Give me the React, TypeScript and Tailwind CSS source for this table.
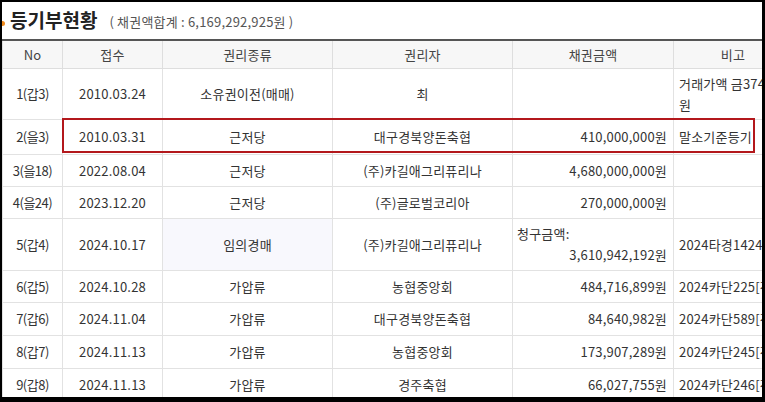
const rows = [
  { no: '1(갑3)', date: '2010.03.24', kind: '소유권이전(매매)', holder: '최', amount: '', note: ['거래가액 금374,000,000', '원'], h: 'h-[51px]' },
  { no: '2(을3)', date: '2010.03.31', kind: '근저당', holder: '대구경북양돈축협', amount: '410,000,000원', note: ['말소기준등기'], h: 'h-[35px]' },
  { no: '3(을18)', date: '2022.08.04', kind: '근저당', holder: '(주)카길애그리퓨리나', amount: '4,680,000,000원', note: [], h: 'h-[32px]' },
  { no: '4(을24)', date: '2023.12.20', kind: '근저당', holder: '(주)글로벌코리아', amount: '270,000,000원', note: [], h: 'h-[32px]' },
  { no: '5(갑4)', date: '2024.10.17', kind: '임의경매', holder: '(주)카길애그리퓨리나', amount: '3,610,942,192원', claim: true, note: ['2024타경14245'], h: 'h-[52px]' },
  { no: '6(갑5)', date: '2024.10.28', kind: '가압류', holder: '농협중앙회', amount: '484,716,899원', note: ['2024카단225[전자]'], h: 'h-[32px]' },
  { no: '7(갑6)', date: '2024.11.04', kind: '가압류', holder: '대구경북양돈축협', amount: '84,640,982원', note: ['2024카단589[전자]'], h: 'h-[33px]' },
  { no: '8(갑7)', date: '2024.11.13', kind: '가압류', holder: '농협중앙회', amount: '173,907,289원', note: ['2024카단245[전자]'], h: 'h-[33px]' },
  { no: '9(갑8)', date: '2024.11.13', kind: '가압류', holder: '경주축협', amount: '66,027,755원', note: ['2024카단246[전자]'], h: 'h-[33px]' },
];

export default function App() {
  return (
    <div className="w-[765px] h-[402px] bg-black pl-[2px] pt-[2px] pr-[3px] pb-[5px] font-['Noto_Sans_CJK_KR',sans-serif] text-[#333]">
      <div className="relative h-full bg-white overflow-hidden">
        <div className="h-[37px] flex items-center gap-[12px] pl-[8px]">
          <span className="absolute left-[-2px] top-[19px] w-[5px] h-[5px] rounded-full bg-[#f08a1c]" />
          <h2 className="text-[19px] font-bold text-[#222]">등기부현황</h2>
          <span className="text-[13px] text-[#555] pt-[3px] tracking-[0.2px]">( 채권액합계 : 6,169,292,925원 )</span>
        </div>

        <table className="table-fixed border-collapse w-[790px] text-[13px] leading-[21px] tracking-[0.2px]">
          <colgroup>
            <col className="w-[60px]" />
            <col className="w-[100px]" />
            <col className="w-[170px]" />
            <col className="w-[180px]" />
            <col className="w-[161px]" />
            <col className="w-[119px]" />
          </colgroup>
          <thead>
            <tr className="h-[28px] bg-[#f7f7f7] border-t-2 border-[#555] text-[#444]">
              {['No', '접수', '권리종류', '권리자', '채권금액', '비고'].map((t) => (
                <th key={t} className="font-normal border-x border-b border-[#dedede] text-center">{t}</th>
              ))}
            </tr>
          </thead>
          <tbody>
            {rows.map((r) => (
              <tr key={r.no} className={r.h}>
                <td className="border-x border-b border-[#e2e2e2] text-center whitespace-nowrap tracking-[-0.5px]">{r.no}</td>
                <td className="border-x border-b border-[#e2e2e2] text-center">{r.date}</td>
                <td className={`border-x border-b border-[#e2e2e2] text-center ${r.claim ? 'bg-[#f8f8fd]' : ''}`}>{r.kind}</td>
                <td className="border-x border-b border-[#e2e2e2] text-center whitespace-nowrap">{r.holder}</td>
                <td className="border-x border-b border-[#e2e2e2] text-right pr-[6px] whitespace-nowrap">
                  {r.claim ? (
                    <div className="flex flex-col">
                      <span className="text-left pl-[4px]">청구금액:</span>
                      <span>{r.amount}</span>
                    </div>
                  ) : r.amount}
                </td>
                <td className="border-x border-b border-[#e2e2e2] text-left pl-[5px] whitespace-nowrap">
                  {r.note.map((n) => <div key={n}>{n}</div>)}
                </td>
              </tr>
            ))}
          </tbody>
        </table>

        <div className="absolute left-[60px] top-[116px] w-[693px] h-[35px] border-2 border-[#b3181c] pointer-events-none" />
      </div>
    </div>
  );
}
